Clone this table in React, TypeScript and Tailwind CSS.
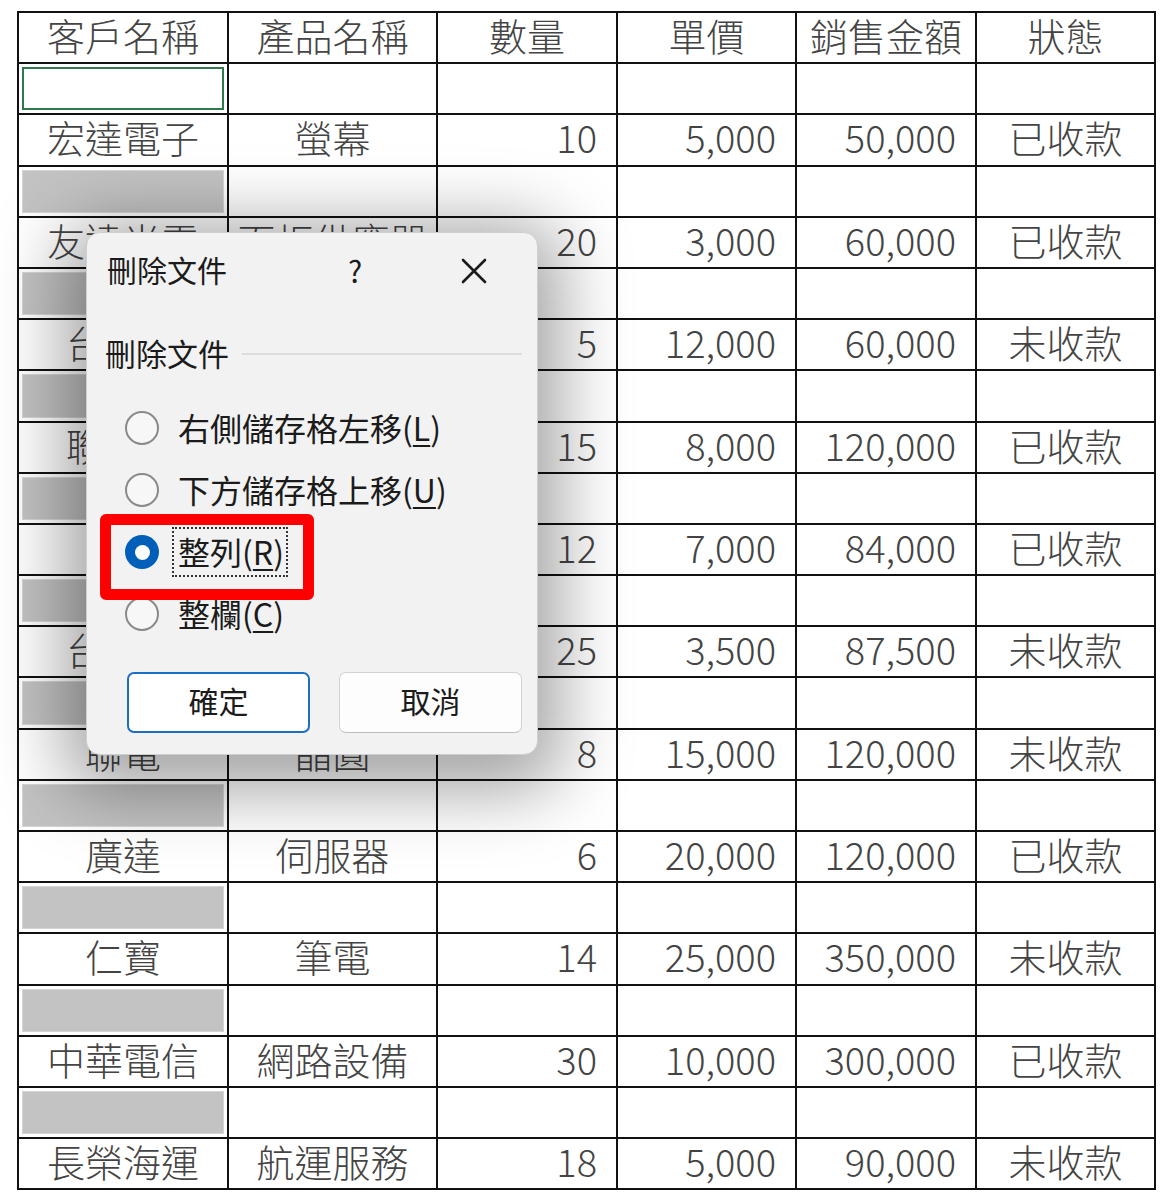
const rows = [
  ['宏達電子', '螢幕', '10', '5,000', '50,000', '已收款'],
  ['友達光電', '面板供應器', '20', '3,000', '60,000', '已收款'],
  ['台積電', '晶片', '5', '12,000', '60,000', '未收款'],
  ['聯發科', '處理器', '15', '8,000', '120,000', '已收款'],
  ['華碩', '主機板', '12', '7,000', '84,000', '已收款'],
  ['台達電', '電源', '25', '3,500', '87,500', '未收款'],
  ['聯電', '晶圓', '8', '15,000', '120,000', '未收款'],
  ['廣達', '伺服器', '6', '20,000', '120,000', '已收款'],
  ['仁寶', '筆電', '14', '25,000', '350,000', '未收款'],
  ['中華電信', '網路設備', '30', '10,000', '300,000', '已收款'],
  ['長榮海運', '航運服務', '18', '5,000', '90,000', '未收款'],
];

const headers = ['客戶名稱', '產品名稱', '數量', '單價', '銷售金額', '狀態'];

function Cell({ children, align = 'center' }: { children?: React.ReactNode; align?: 'center' | 'right' }) {
  return (
    <div
      className={`bg-white flex items-center pb-[5px] ${align === 'right' ? 'justify-end pr-[19px]' : 'justify-center'}`}
    >
      {children}
    </div>
  );
}

function BlankRow({ first }: { first?: boolean }) {
  return (
    <>
      <div className="bg-white p-[3px]">
        {first ? (
          <div className="h-full border-2 border-[#2f7a4d]" />
        ) : (
          <div className="h-full bg-[#c3c3c3] border border-[#d6d6d6]" />
        )}
      </div>
      <div className="bg-white" />
      <div className="bg-white" />
      <div className="bg-white" />
      <div className="bg-white" />
      <div className="bg-white" />
    </>
  );
}

function Radio({ checked, label, mnemonic, focus }: { checked?: boolean; label: string; mnemonic: string; focus?: boolean }) {
  return (
    <div className="flex items-center h-[62px] pl-[38px] gap-[19px]">
      {checked ? (
        <div className="w-[34px] h-[34px] rounded-full bg-[#005fb8] flex items-center justify-center">
          <div className="w-[15px] h-[15px] rounded-full bg-white" />
        </div>
      ) : (
        <div className="w-[34px] h-[34px] rounded-full border-2 border-[#8a8a8a] bg-[#f7f7f7]" />
      )}
      <span className="relative text-[32px] leading-none text-[#1b1b1b] -mt-[3px]">
        {label}(<span className="underline underline-offset-[4px] decoration-[2px]">{mnemonic}</span>)
        {focus && <span className="absolute -left-[6px] -right-[4px] -top-[8px] -bottom-[10px] border-2 border-dotted border-[#333]" />}
      </span>
    </div>
  );
}

function DeleteDialog() {
  return (
    <div className="absolute left-[86px] top-[232px] w-[452px] h-[523px] rounded-[14px] bg-[#f2f2f2] border border-[#cfcfcf] shadow-[0_14px_70px_22px_rgba(0,0,0,0.36)]">
      <div className="flex items-center h-[76px] pl-[20px] pr-[50px] text-[30px] text-[#1b1b1b]">
        <span className="w-[241px] leading-none -mt-[4px]">刪除文件</span>
        <span className="leading-none -mt-[2px]">?</span>
        <svg className="ml-auto" width="26" height="26" viewBox="0 0 26 26">
          <path d="M2 2 L24 24 M24 2 L2 24" stroke="#1b1b1b" strokeWidth="2.6" strokeLinecap="round" />
        </svg>
      </div>
      <div className="flex items-center mt-[27px] h-[36px] pl-[18px] pr-[15px]">
        <span className="text-[31px] leading-none text-[#1b1b1b] -mt-[3px]">刪除文件</span>
        <div className="flex-1 ml-[13px] h-[2px] bg-[#dcdcdc]" />
      </div>
      <div className="mt-[25px] flex flex-col">
        <Radio label="右側儲存格左移" mnemonic="L" />
        <Radio label="下方儲存格上移" mnemonic="U" />
        <Radio checked focus label="整列" mnemonic="R" />
        <Radio label="整欄" mnemonic="C" />
      </div>
      <div className="flex gap-[29px] pl-[40px] mt-[27px]">
        <button className="w-[183px] h-[61px] pb-[4px] rounded-[7px] border-2 border-[#1a6fc4] bg-white text-[30px] text-[#1b1b1b]">
          確定
        </button>
        <button className="w-[183px] h-[61px] pb-[4px] rounded-[7px] border border-[#d3d3d3] border-b-[#bdbdbd] bg-[#fdfdfd] text-[30px] text-[#1b1b1b]">
          取消
        </button>
      </div>
      <div className="absolute left-[13px] top-[281px] w-[214px] h-[86px] rounded-[6px] border-[11px] border-[#ff0000]" />
    </div>
  );
}

export default function App() {
  return (
    <div className="relative w-[1160px] h-[1200px] bg-white overflow-hidden font-['Noto_Sans_CJK_TC','Noto_Sans',sans-serif]">
      <div className="pl-[17px] pt-[11px]">
        <div className="grid w-max bg-[#111] p-[2px] gap-[2px] grid-cols-[208px_207px_178px_177px_178px_177px] grid-rows-[repeat(23,49.2px)] text-[38px] leading-none font-light text-[#444]">
          {headers.map((h) => (
            <Cell key={h}>{h}</Cell>
          ))}
          {rows.map((r, i) => (
            <>
              <BlankRow key={`b${i}`} first={i === 0} />
              <Cell key={`a${i}`}>{r[0]}</Cell>
              <Cell key={`p${i}`}>{r[1]}</Cell>
              <Cell key={`q${i}`} align="right">{r[2]}</Cell>
              <Cell key={`u${i}`} align="right">{r[3]}</Cell>
              <Cell key={`t${i}`} align="right">{r[4]}</Cell>
              <Cell key={`s${i}`}>{r[5]}</Cell>
            </>
          ))}
        </div>
      </div>
      <DeleteDialog />
    </div>
  );
}
